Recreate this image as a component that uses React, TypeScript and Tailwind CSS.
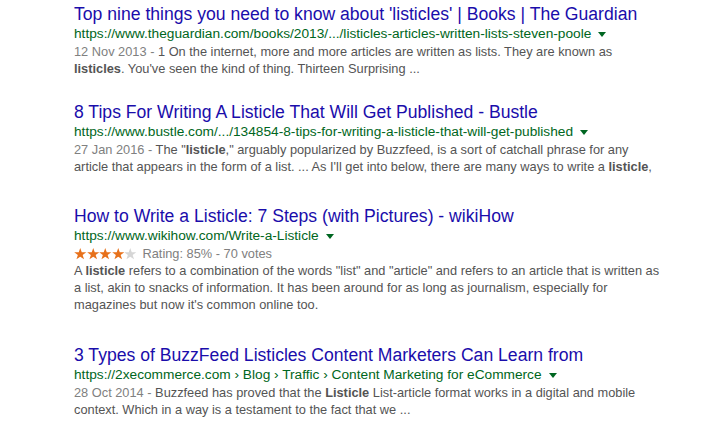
const Arrow = () => (
  <span className="ml-[7px] inline-block h-0 w-0 border-x-[4px] border-t-[5px] border-x-transparent border-t-[#006621] align-middle" />
);

const Star = ({ on }: { on: boolean }) => (
  <svg width="12.5" height="12" viewBox="0 0 24 23" className="block">
    <path
      d="M12 0l2.9 8.2H23.6l-7 5.2 2.7 8.4L12 16.6 4.7 21.8l2.7-8.4-7-5.2h8.7z"
      fill={on ? '#e7711b' : '#d6d6d6'}
    />
  </svg>
);

const Stars = () => (
  <span className="mr-[6px] inline-flex">
    {[0, 1, 2, 3, 4].map((i) => (
      <Star key={i} on={i < 4} />
    ))}
  </span>
);

export default function App() {
  return (
    <div
      className="min-h-[425px] w-[709px] bg-white pl-[74px] pt-[4px]"
      style={{ fontFamily: '"Liberation Sans", Arial, sans-serif' }}
    >
      {/* result 1 */}
      <div>
        <div className="whitespace-nowrap text-[17.6px] leading-[21px] text-[#1a0dab]">
          Top nine things you need to know about 'listicles' | Books | The Guardian
        </div>
        <div className="whitespace-nowrap text-[13.7px] leading-[18px] text-[#006621]">
          https://www.theguardian.com/books/2013/.../listicles-articles-written-lists-steven-poole
          <Arrow />
        </div>
        <div className="whitespace-nowrap text-[12.8px] leading-[17px] text-[#545454]">
          <div>
            <span className="text-[#808080]">12 Nov 2013 - </span>1 On the internet, more and more articles are written as lists. They are known as
          </div>
          <div>
            <b>listicles</b>. You've seen the kind of thing. Thirteen Surprising ...
          </div>
        </div>
      </div>

      {/* result 2 */}
      <div className="mt-[25px]">
        <div className="whitespace-nowrap text-[17.6px] leading-[21px] text-[#1a0dab]">
          8 Tips For Writing A Listicle That Will Get Published - Bustle
        </div>
        <div className="whitespace-nowrap text-[13.7px] leading-[18px] text-[#006621]">
          https://www.bustle.com/.../134854-8-tips-for-writing-a-listicle-that-will-get-published
          <Arrow />
        </div>
        <div className="whitespace-nowrap text-[12.8px] leading-[17px] text-[#545454]">
          <div>
            <span className="text-[#808080]">27 Jan 2016 - </span>The "<b>listicle</b>," arguably popularized by Buzzfeed, is a sort of catchall phrase for any
          </div>
          <div>
            article that appears in the form of a list. ... As I'll get into below, there are many ways to write a <b>listicle</b>,
          </div>
        </div>
      </div>

      {/* result 3 */}
      <div className="mt-[31px]">
        <div className="whitespace-nowrap text-[17.6px] leading-[21px] text-[#1a0dab]">
          How to Write a Listicle: 7 Steps (with Pictures) - wikiHow
        </div>
        <div className="whitespace-nowrap text-[13.7px] leading-[18px] text-[#006621]">
          https://www.wikihow.com/Write-a-Listicle
          <Arrow />
        </div>
        <div className="flex items-center whitespace-nowrap text-[12.8px] leading-[17px] text-[#808080]">
          <Stars />
          Rating: 85% - 70 votes
        </div>
        <div className="whitespace-nowrap text-[12.8px] leading-[17px] text-[#545454]">
          <div>
            A <b>listicle</b> refers to a combination of the words "list" and "article" and refers to an article that is written as
          </div>
          <div>a list, akin to snacks of information. It has been around for as long as journalism, especially for</div>
          <div>magazines but now it's common online too.</div>
        </div>
      </div>

      {/* result 4 */}
      <div className="mt-[32px]">
        <div className="whitespace-nowrap text-[17.6px] leading-[21px] text-[#1a0dab]">
          3 Types of BuzzFeed Listicles Content Marketers Can Learn from
        </div>
        <div className="whitespace-nowrap text-[13.7px] leading-[18px] text-[#006621]">
          https://2xecommerce.com › Blog › Traffic › Content Marketing for eCommerce
          <Arrow />
        </div>
        <div className="whitespace-nowrap text-[12.8px] leading-[17px] text-[#545454]">
          <div>
            <span className="text-[#808080]">28 Oct 2014 - </span>Buzzfeed has proved that the <b>Listicle</b> List-article format works in a digital and mobile
          </div>
          <div>context. Which in a way is a testament to the fact that we ...</div>
        </div>
      </div>
    </div>
  );
}
